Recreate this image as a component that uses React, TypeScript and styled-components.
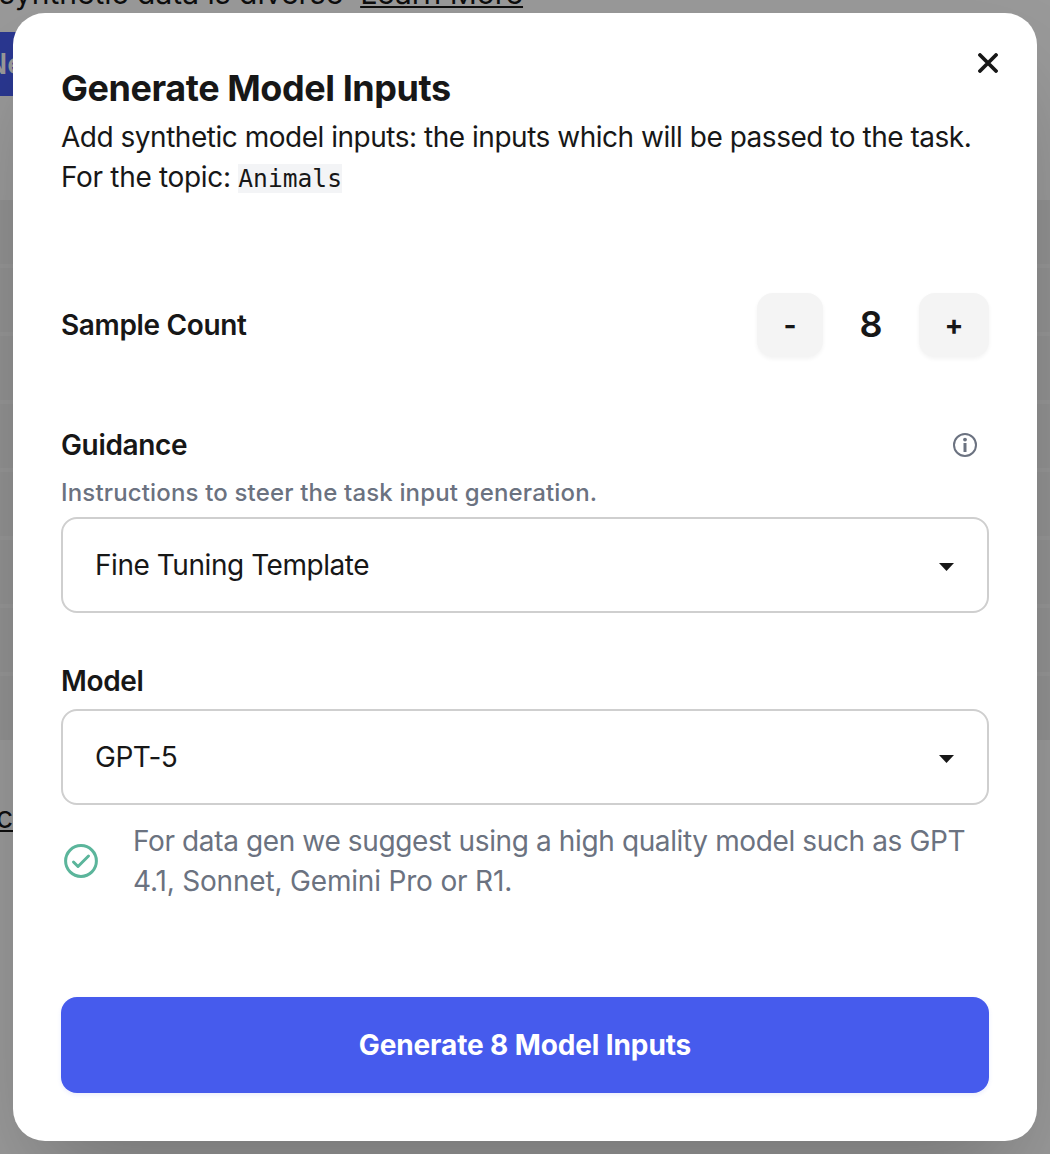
import React, { useState } from "react";
import styled, { createGlobalStyle } from "styled-components";

const Global = createGlobalStyle`
  * { box-sizing: border-box; }
  body { margin: 0; background: #989898; }
  button { font-family: inherit; color: inherit; border: 0; padding: 0; cursor: pointer; }
  p, h3 { margin: 0; }
`;

const Stage = styled.div`
  display: grid;
  width: 1050px;
  height: 1154px;
  overflow: hidden;
  font-family: Inter, "Liberation Sans", sans-serif;
  color: #171717;
  font-size: 28px;
  line-height: 40px;
`;

const Page = styled.div`
  grid-area: 1 / 1;
  display: flex;
  flex-direction: column;
  height: 1154px;
  overflow: hidden;
  background: #999999;
  color: #0e0e0e;
`;

const Blurb = styled.div`
  display: flex;
  gap: 17px;
  height: 32px;
  margin-top: -27px;
  margin-left: -1px;
  font-size: 30px;
  line-height: 40px;
  white-space: nowrap;
`;

const PageLink = styled.span`
  text-decoration: underline;
  text-decoration-thickness: 2px;
  text-underline-offset: 2px;
`;

const PageButton = styled.div`
  display: flex;
  align-items: center;
  width: 128px;
  height: 64px;
  margin: 27px 0 104px -14px;
  background: #2a3790;
  color: #999999;
  font-size: 28px;
  font-weight: 600;
`;

const Table = styled.div`
  display: flex;
  flex-direction: column;
  gap: 4px;
  background: #959595;
`;

const TableRow = styled.div`
  height: 64px;
  background: #919191;
`;

const PageFooter = styled.div`
  display: flex;
  margin: 57px 0 0 -4px;
  font-size: 30px;
`;

const Dialog = styled.div`
  grid-area: 1 / 1;
  position: relative;
  display: flex;
  flex-direction: column;
  width: 1024px;
  height: 1128px;
  margin: 13px;
  padding: 48px;
  border-radius: 32px;
  background: #ffffff;
  box-shadow: 0 50px 100px -24px rgba(0, 0, 0, 0.25);

  > * { flex-shrink: 0; }
`;

const CloseButton = styled.button`
  position: absolute;
  top: 18px;
  right: 17px;
  display: grid;
  place-items: center;
  width: 64px;
  height: 64px;
  background: none;
`;

const Title = styled.h3`
  height: 56px;
  font-size: 36px;
  line-height: 54px;
  font-weight: 700;
  letter-spacing: -0.44px;
`;

const Description = styled.p`
  height: 80px;
  white-space: nowrap;
  letter-spacing: -0.48px;
`;

const TopicLine = styled.span`
  letter-spacing: -0.32px;
`;

const Topic = styled.code`
  background: #f3f4f6;
  font-family: "DejaVu Sans Mono", monospace;
  font-size: 24.6px;
  letter-spacing: 0;
  line-height: 1;
`;

const CountRow = styled.div`
  display: flex;
  align-items: center;
  height: 64px;
  margin-top: 96px;
`;

const Label = styled.div`
  flex: 1;
  font-weight: 560;
  letter-spacing: -0.35px;
`;

const StepButton = styled.button<{ $width: number }>`
  width: ${(p) => p.$width}px;
  height: 64px;
  border-radius: 16px;
  background: #f4f4f4;
  font-size: 28px;
  font-weight: 650;
  box-shadow: 0 2px 4px rgba(0, 0, 0, 0.05);
`;

const Count = styled.div`
  width: 96px;
  padding-bottom: 2px;
  text-align: center;
  font-size: 36px;
  font-weight: 580;
`;

const FieldHeader = styled.div<{ $gap: number }>`
  display: flex;
  align-items: center;
  height: 40px;
  margin-top: ${(p) => p.$gap}px;
`;

const InfoIcon = styled.svg`
  margin-right: 11px;
`;

const Hint = styled.div`
  margin-top: 12px;
  font-size: 24px;
  line-height: 32px;
  font-weight: 540;
  letter-spacing: 0.16px;
  color: #6b7280;
`;

const Select = styled.button`
  display: flex;
  align-items: center;
  justify-content: space-between;
  height: 96px;
  margin-top: 8px;
  padding: 0 33px 0 32px;
  border: 2px solid #cfcfcf;
  border-radius: 16px;
  background: #ffffff;
  font-size: 28px;
  letter-spacing: -0.45px;
  text-align: left;
`;

const CaretIcon = styled.svg`
  margin-top: 4px;
`;

const Suggestion = styled.div`
  display: flex;
  align-items: center;
  gap: 35px;
  margin-top: 16px;
  padding-left: 3px;
  color: #6b7280;
`;

const SuggestionLine = styled.p<{ $tracking: number }>`
  white-space: nowrap;
  letter-spacing: ${(p) => p.$tracking}px;
`;

const Submit = styled.button`
  height: 96px;
  margin-top: 96px;
  border-radius: 16px;
  background: #465bed;
  color: #ffffff;
  font-size: 28px;
  font-weight: 660;
  letter-spacing: -0.12px;
  box-shadow: 0 2px 4px rgba(70, 91, 237, 0.1);
`;

const Caret = () => (
  <CaretIcon width="15" height="8" viewBox="0 0 15 8" fill="#171717">
    <path d="M0 0H15L7.5 8Z" />
  </CaretIcon>
);

export default function App() {
  const [count, setCount] = useState(8);
  return (
    <>
      <Global />
      <Stage>
        <Page>
          <Blurb>
            <span>synthetic data is diverse</span>
            <PageLink>Learn More</PageLink>
          </Blurb>
          <PageButton>Next</PageButton>
          <Table>
            {Array.from({ length: 8 }, (_, i) => (
              <TableRow key={i} />
            ))}
          </Table>
          <PageFooter>
            <PageLink>c</PageLink>
          </PageFooter>
        </Page>
        <Dialog role="dialog">
          <CloseButton aria-label="Close">
            <svg width="20" height="20" viewBox="0 0 20 20" stroke="#171717" strokeWidth="3.8" strokeLinecap="round">
              <path d="M2 2L18 18M18 2L2 18" />
            </svg>
          </CloseButton>
          <Title>Generate Model Inputs</Title>
          <Description>
            Add synthetic model inputs: the inputs which will be passed to the task.
            <br />
            <TopicLine>
              For the topic: <Topic>Animals</Topic>
            </TopicLine>
          </Description>
          <CountRow>
            <Label>Sample Count</Label>
            <StepButton $width={66} onClick={() => setCount(Math.max(1, count - 1))}>-</StepButton>
            <Count>{count}</Count>
            <StepButton $width={70} onClick={() => setCount(count + 1)}>+</StepButton>
          </CountRow>
          <FieldHeader $gap={68}>
            <Label>Guidance</Label>
            <InfoIcon width="26" height="26" viewBox="0 0 26 26" fill="none">
              <circle cx="13" cy="13" r="11" stroke="#6b7280" strokeWidth="2" />
              <circle cx="13" cy="7.6" r="1.9" fill="#6b7280" />
              <path d="M13 11V20" stroke="#6b7280" strokeWidth="3" />
            </InfoIcon>
          </FieldHeader>
          <Hint>Instructions to steer the task input generation.</Hint>
          <Select>
            Fine Tuning Template
            <Caret />
          </Select>
          <FieldHeader $gap={48}>
            <Label>Model</Label>
          </FieldHeader>
          <Select>
            GPT-5
            <Caret />
          </Select>
          <Suggestion>
            <svg width="34" height="34" viewBox="0 0 34 34" fill="none" stroke="#5bb59b" strokeWidth="3">
              <circle cx="17" cy="17" r="15.4" />
              <path d="M9.5 18L14 22.5L24.5 12" strokeLinecap="round" strokeLinejoin="round" />
            </svg>
            <div>
              <SuggestionLine $tracking={-0.38}>
                For data gen we suggest using a high quality model such as GPT
              </SuggestionLine>
              <SuggestionLine $tracking={-0.18}>4.1, Sonnet, Gemini Pro or R1.</SuggestionLine>
            </div>
          </Suggestion>
          <Submit>Generate {count} Model Inputs</Submit>
        </Dialog>
      </Stage>
    </>
  );
}
